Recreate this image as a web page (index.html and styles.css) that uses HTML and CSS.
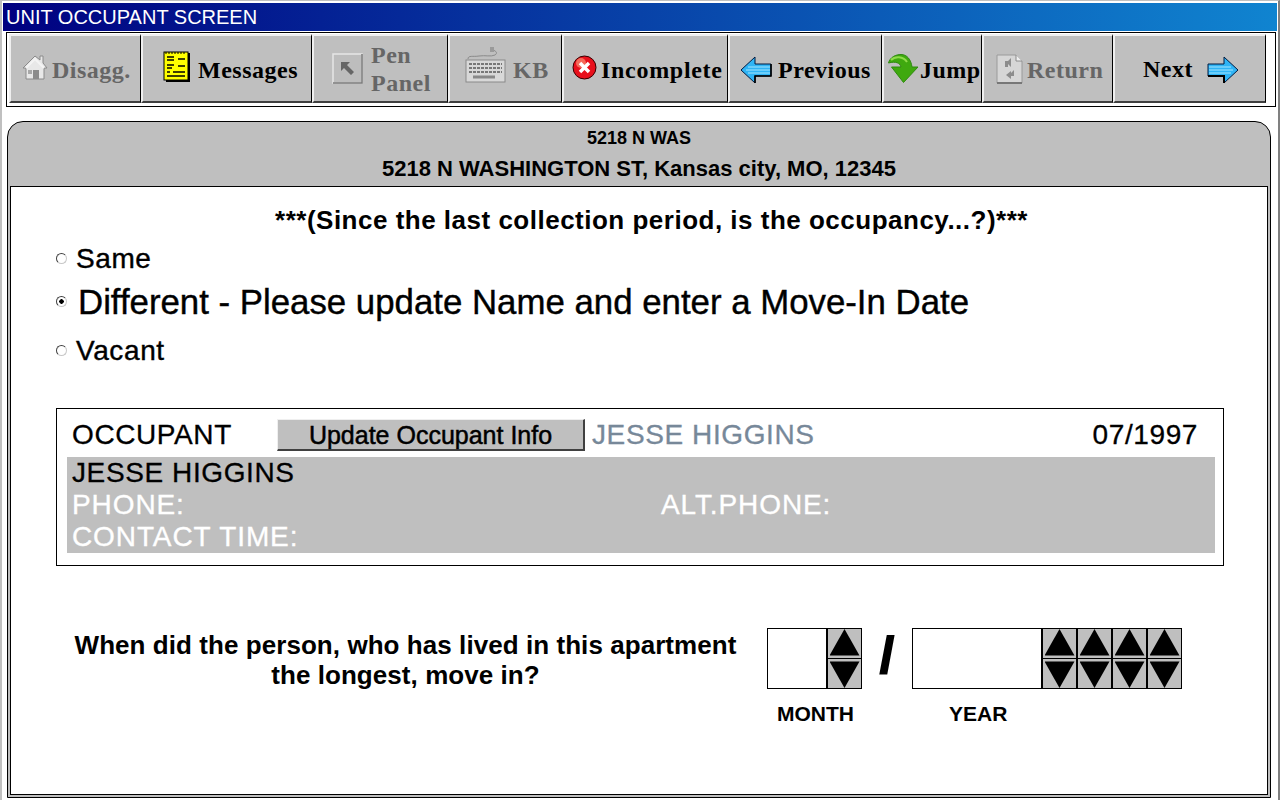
FILE: index.html
```html
<!DOCTYPE html>
<html lang="en">
<head>
    <meta charset="UTF-8">
    <title>Unit Occupant Screen</title>
    <link rel="stylesheet" href="styles.css">
</head>
<body>
    <div class="window">
        <div class="title-bar">UNIT OCCUPANT SCREEN</div>

        <!-- Toolbar -->
        <div class="toolbar">
            <div class="tool-btn off btn-disagg">
                <svg width="26" height="28" viewBox="0 0 26 28"><path d="M18 3h3v7l4 5h-3v11H4V15H1L13 3l5 4z" fill="#e8e8e8" stroke="#8a8a8a"/><path d="M4 15L13 6l9 9" fill="none" stroke="#f4f4f4" stroke-width="2"/><rect x="11" y="17" width="6" height="9" fill="#8c8c8c"/><rect x="6" y="17" width="4" height="4" fill="#a8a8a8"/></svg>
                <span>Disagg.</span>
            </div>
            <div class="tool-btn btn-messages">
                <svg width="28" height="31" viewBox="0 0 28 31"><rect x="3" y="2" width="24" height="29" fill="#000"/><rect x="1" y="1" width="24" height="28" fill="#ff0" stroke="#000"/><path d="M3 1v2M6 1v2M9 1v2M12 1v2M15 1v2M18 1v2M21 1v2" stroke="#000"/><path d="M4 6h7M4 9h7M15 8h7M4 14h7M15 15h7M4 17h5M4 21h3M10 21h12M4 25h18" stroke="#000" stroke-width="1.4"/></svg>
                <span>Messages</span>
            </div>
            <div class="tool-btn off btn-pen">
                <svg width="31" height="31" viewBox="0 0 31 31"><rect x="1" y="1" width="29" height="29" fill="#bdbdbd" stroke="#e6e6e6" stroke-width="1.5"/><path d="M30 1v29H1" fill="none" stroke="#7a7a7a" stroke-width="1.5"/><path d="M9 9h9l-3 3 7 7-3 3-7-7-3 3z" fill="#666"/></svg>
                <span class="two-line">Pen<br>Panel</span>
            </div>
            <div class="tool-btn off btn-kb">
                <svg width="41" height="36" viewBox="0 0 41 36"><path d="M3 12C3 8 8 10 14 9s12 1 16-1c3-2 1-4-2-5M26 2l3 0" fill="none" stroke="#8a8a8a"/><rect x="25" y="0" width="4" height="5" fill="#9a9a9a"/><rect x="1" y="13" width="39" height="22" fill="#d8d8d8" stroke="#8a8a8a"/><path d="M4 17h33M4 21h33M4 25h33" stroke="#777" stroke-width="2" stroke-dasharray="3 1"/><path d="M8 30h22" stroke="#888" stroke-width="3"/></svg>
                <span>KB</span>
            </div>
            <div class="tool-btn btn-incomplete">
                <svg width="25" height="25" viewBox="0 0 25 25"><circle cx="12.5" cy="12.5" r="11.5" fill="#e8101c" stroke="#300"/><circle cx="9" cy="8" r="5" fill="#f56a5a"/><path d="M8 8l9 9M17 8l-9 9" stroke="#fff" stroke-width="3.5"/></svg>
                <span>Incomplete</span>
            </div>
            <div class="tool-btn btn-previous">
                <svg width="32" height="28" viewBox="0 0 32 28"><path d="M1 14L15 1v7h16v12H15v7z" fill="#2fb4f5" stroke="#001a40"/><path d="M8 11h22M6 14h24M8 17h22" stroke="#a5e6ff"/><path d="M31 8v12H15v7" fill="none" stroke="#000" stroke-width="1.6"/></svg>
                <span>Previous</span>
            </div>
            <div class="tool-btn btn-jump">
                <svg width="31" height="29" viewBox="0 0 31 29"><path d="M.5 9C2 3 8 .5 13 .5c6 0 10 5 11 12.5h6L15.5 28.5 3.5 13H13C12 9 8 7 .5 9z" fill="#3fa90f" stroke="#2f8a10"/><path d="M3 6C7 2 15 2 19 8" fill="none" stroke="#8fdc4a" stroke-width="2"/></svg>
                <span>Jump</span>
            </div>
            <div class="tool-btn off btn-return">
                <svg width="27" height="30" viewBox="0 0 27 30"><path d="M1 1h19l6 6v22H1z" fill="#d6d6d6" stroke="#9a9a9a"/><path d="M1 29h25" stroke="#777" stroke-width="2"/><path d="M20 1v6h6" fill="#efefef" stroke="#8a8a8a"/><path d="M9 13V7h3l3-3 0 9-3-3v3zM18 16v6h-3v3l-5-4 5-4v2z" fill="#8c8c8c"/></svg>
                <span>Return</span>
            </div>
            <div class="tool-btn btn-next">
                <span>Next</span>
                <svg width="32" height="28" viewBox="0 0 32 28"><path d="M31 14L17 1v7H1v12h16v7z" fill="#2fb4f5" stroke="#001a40"/><path d="M2 11h22M2 14h24M2 17h22" stroke="#a5e6ff"/><path d="M1 20h16v7" fill="none" stroke="#000" stroke-width="2"/></svg>
            </div>
        </div>

        <!-- Main panel -->
        <div class="panel">
            <div class="panel-head">
                <div class="unit-code">5218 N WAS</div>
                <div class="unit-address">5218 N WASHINGTON ST, Kansas city, MO, 12345</div>
            </div>
            <div class="panel-body">
                <div class="question">***(Since the last collection period, is the occupancy...?)***</div>

                <div class="option opt-same"><span class="radio"></span>Same</div>
                <div class="option opt-diff"><span class="radio checked"></span>Different - Please update Name and enter a Move-In Date</div>
                <div class="option opt-vacant"><span class="radio"></span>Vacant</div>

                <div class="occupant-box">
                    <div class="occupant-top">
                        <span class="occupant-label">OCCUPANT</span>
                        <span class="update-btn">Update Occupant Info</span>
                        <span class="occupant-name">JESSE HIGGINS</span>
                        <span class="occupant-date">07/1997</span>
                    </div>
                    <div class="occupant-info">
                        <div class="info-name">JESSE HIGGINS</div>
                        <div class="info-row"><span class="info-phone">PHONE:</span><span>ALT.PHONE:</span></div>
                        <div class="info-row"><span>CONTACT TIME:</span></div>
                    </div>
                </div>

                <div class="move-in">
                    <div class="move-in-text">When did the person, who has lived in this apartment<br>the longest, move in?</div>
                    <div class="date-entry">
                        <div class="date-inputs">
                            <div class="date-box month-box"></div>
                            <div class="spin"><span class="up"></span><span class="line"></span><span class="down"></span></div>
                            <div class="slash">/</div>
                            <div class="date-box year-box"></div>
                            <div class="spin"><span class="up"></span><span class="line"></span><span class="down"></span></div>
                            <div class="spin"><span class="up"></span><span class="line"></span><span class="down"></span></div>
                            <div class="spin"><span class="up"></span><span class="line"></span><span class="down"></span></div>
                            <div class="spin"><span class="up"></span><span class="line"></span><span class="down"></span></div>
                        </div>
                        <div class="date-labels">
                            <span class="label-month">MONTH</span>
                            <span class="label-year">YEAR</span>
                        </div>
                    </div>
                </div>
            </div>
        </div>
    </div>
</body>
</html>
```

FILE: styles.css
```css
html, body {
    margin: 0;
    padding: 0;
    background-color: #fff;
}
body {
    font-family: "Liberation Sans", Arial, sans-serif;
    color: #000;
}
.window {
    box-sizing: border-box;
    width: 1280px;
    height: 800px;
    border-top: 1px solid #c0c0c0;
    border-left: 2px solid #c0c0c0;
    border-right: 2px solid #808080;
    padding: 2px 1px 0 1px;
    overflow: hidden;
}
.title-bar {
    height: 28px;
    line-height: 28px;
    padding-left: 3px;
    font-size: 20px;
    color: #fff;
    background: linear-gradient(90deg, #000080 0%, #1084d0 100%);
}
.toolbar {
    display: flex;
    height: 72px;
    margin: 1px 1px 0 3px;
    padding: 1px 0 0 2px;
    border: 1px solid #000;
    font-family: "Liberation Serif", "Times New Roman", serif;
    font-weight: bold;
    font-size: 24px;
    letter-spacing: 0.5px;
}
.tool-btn {
    box-sizing: border-box;
    display: flex;
    align-items: center;
    height: 69px;
    background-color: #bfbfbf;
    border-top: 2px solid #efefef;
    border-left: 2px solid #efefef;
    border-right: 1px solid #000;
    border-bottom: 2px solid #404040;
}
.tool-btn svg {
    flex: none;
}
.tool-btn span {
    padding-top: 3px;
}
.tool-btn.off {
    color: #666;
}
.btn-disagg { width: 132px; gap: 4px; padding-left: 11px; }
.btn-messages { width: 171px; gap: 7px; padding-left: 20px; }
.btn-pen { width: 136px; gap: 8px; padding-left: 18px; }
.btn-kb { width: 114px; gap: 7px; padding-left: 15px; }
.btn-incomplete { width: 166px; gap: 4px; padding-left: 8px; letter-spacing: 0.7px; }
.btn-previous { width: 154px; gap: 6px; padding-left: 10px; }
.btn-jump { width: 100px; gap: 1px; padding-left: 4px; }
.btn-return { width: 131px; gap: 4px; padding-left: 12px; }
.btn-next { width: 153px; gap: 14px; padding-left: 28px; }
.btn-disagg svg { margin-top: -3px; }
.btn-messages svg { margin-top: -4px; }
.btn-kb svg { margin-top: -8px; }
.btn-incomplete svg { margin-top: -2px; }
.btn-previous svg { margin-top: 2px; }
.btn-jump svg { margin-top: -1px; }
.btn-next svg { margin-top: 3px; }
.btn-next span { padding-top: 1px; }
.tool-btn .two-line {
    padding-top: 1px;
    line-height: 28px;
}
.panel {
    box-sizing: border-box;
    height: 677px;
    margin: 14px 0 0 4px;
    width: 1264px;
    border: 1px solid #000;
    border-radius: 16px 16px 0 0;
    background-color: #bfbfbf;
    padding: 0 2px 2px 2px;
}
.panel-head {
    height: 64px;
    text-align: center;
    font-weight: bold;
}
.unit-code {
    padding-top: 6px;
    font-size: 18px;
    line-height: 20px;
}
.unit-address {
    padding-top: 9px;
    font-size: 22px;
    line-height: 24px;
}
.panel-body {
    box-sizing: border-box;
    height: 609px;
    background-color: #fff;
    border: 1px solid #000;
    padding-top: 19px;
}
.question {
    padding-left: 25px;
    text-align: center;
    font-size: 26px;
    line-height: 28px;
    font-weight: bold;
    letter-spacing: 0.5px;
}
.option {
    display: flex;
    align-items: center;
    margin-left: 45px;
    font-size: 28px;
    line-height: 30px;
    letter-spacing: 0.6px;
    -webkit-text-stroke: 0.4px #000;
}
.opt-same { margin-top: 10px; }
.opt-diff { margin-top: 10px; font-size: 34.8px; line-height: 36px; letter-spacing: 0; }
.opt-vacant { margin-top: 16px; }
.radio {
    box-sizing: border-box;
    width: 11px;
    height: 11px;
    margin-right: 9px;
    margin-bottom: 2px;
    border-radius: 50%;
    background-color: #fff;
    border: 1px solid #c8c8c8;
    border-top-color: #404040;
    border-left-color: #404040;
}
.radio.checked {
    margin-right: 11px;
    background: radial-gradient(circle, #000 0, #000 2px, #fff 2.5px);
}
.occupant-box {
    box-sizing: border-box;
    width: 1168px;
    height: 158px;
    margin: 42px 0 0 45px;
    padding: 10px 8px 0 10px;
    border: 1px solid #000;
    font-size: 28px;
    letter-spacing: 0.6px;
    -webkit-text-stroke: 0.3px currentColor;
}
.occupant-top {
    display: flex;
    align-items: center;
    height: 32px;
    padding-left: 5px;
}
.occupant-label {
    width: 205px;
}
.update-btn {
    box-sizing: border-box;
    width: 308px;
    height: 32px;
    line-height: 30px;
    font-size: 25px;
    letter-spacing: 0;
    text-align: center;
    background-color: #bfbfbf;
    border-top: 1px solid #efefef;
    border-left: 1px solid #efefef;
    border-right: 2px solid #404040;
    border-bottom: 2px solid #404040;
    -webkit-text-stroke: 0.5px #000;
}
.occupant-name {
    margin-left: 7px;
    color: #778899;
}
.occupant-date {
    margin-left: auto;
    padding-right: 17px;
}
.occupant-info {
    height: 96px;
    margin-top: 6px;
    padding-left: 5px;
    background-color: #bfbfbf;
    color: #fff;
    line-height: 32px;
    letter-spacing: 0.9px;
}
.info-name {
    color: #000;
    letter-spacing: 0.6px;
}
.info-row {
    display: flex;
}
.info-phone {
    width: 589px;
}
.move-in {
    display: flex;
    margin-top: 62px;
}
.move-in-text {
    box-sizing: border-box;
    width: 756px;
    padding: 2px 0 0 33px;
    text-align: center;
    font-size: 26px;
    line-height: 30px;
    font-weight: bold;
    letter-spacing: 0.06px;
}
.date-inputs {
    display: flex;
    align-items: flex-start;
}
.date-box {
    box-sizing: border-box;
    height: 61px;
    border: 1px solid #000;
    background-color: #fff;
}
.month-box { width: 60px; }
.year-box { width: 130px; }
.slash {
    width: 50px;
    text-align: center;
    font-size: 50px;
    line-height: 54px;
    font-weight: bold;
    -webkit-text-stroke: 2px #000;
}
.spin {
    box-sizing: border-box;
    width: 35px;
    height: 61px;
    border: 1px solid #000;
    background-color: #bfbfbf;
    display: flex;
    flex-direction: column;
    align-items: center;
}
.spin .up {
    width: 30px;
    height: 27px;
    background-color: #000;
    clip-path: polygon(50% 0, 100% 100%, 0 100%);
}
.spin .line {
    width: 100%;
    height: 2px;
    margin: 2px 0;
    background-color: #000;
}
.spin .down {
    width: 30px;
    height: 27px;
    background-color: #000;
    clip-path: polygon(0 0, 100% 0, 50% 100%);
}
.date-labels {
    display: flex;
    margin-top: 13px;
    font-size: 21px;
    line-height: 24px;
    font-weight: bold;
}
.label-month {
    margin-left: 10px;
    width: 172px;
}
```
